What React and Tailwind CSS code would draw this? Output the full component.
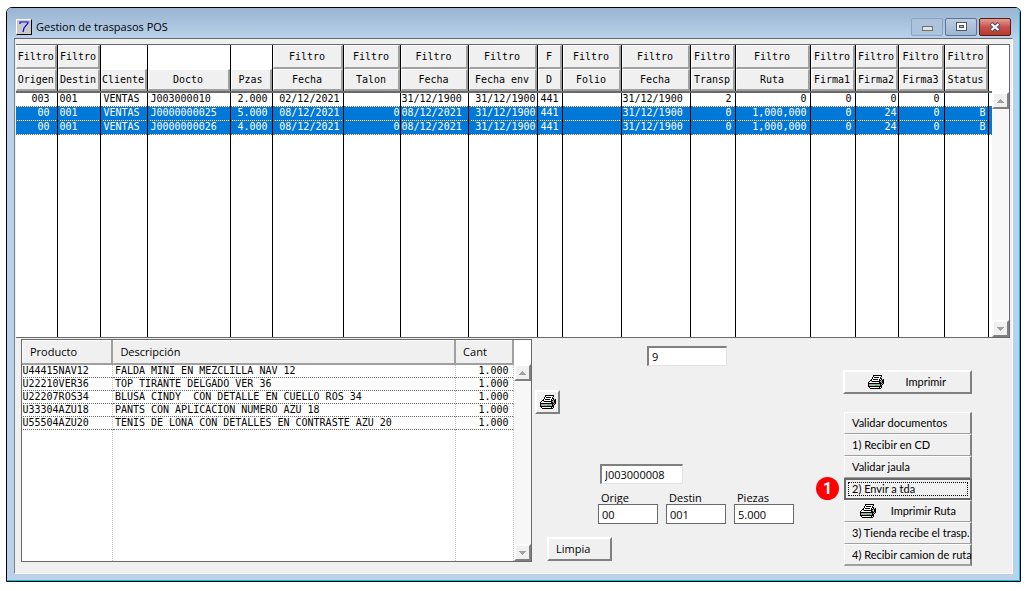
import { useState } from "react";

const columns = [
  { key: "origen", label: "Origen", filter: "Filtro", width: "w-[41px]", align: "text-right pr-[7px]" },
  { key: "destin", label: "Destin", filter: "Filtro", width: "w-[43px]", align: "text-left pl-[2px]" },
  { key: "cliente", label: "Cliente", width: "w-[47px]", align: "text-left pl-[3px]" },
  { key: "docto", label: "Docto", width: "w-[83px]", align: "text-left pl-[3px]" },
  { key: "pzas", label: "Pzas", width: "w-[42px]", align: "text-right pr-[4px]" },
  { key: "fecha", label: "Fecha", filter: "Filtro", width: "w-[71px]", align: "text-right pr-[3px]" },
  { key: "talon", label: "Talon", filter: "Filtro", width: "w-[57px]", align: "text-right" },
  { key: "fecha2", label: "Fecha", filter: "Filtro", width: "w-[68px]", align: "text-left pl-[1px]" },
  { key: "fechaEnv", label: "Fecha env", filter: "Filtro", width: "w-[69px]", align: "text-right pr-[1px]" },
  { key: "d", label: "D", filter: "F", width: "w-[25px]", align: "text-left pl-[3px]" },
  { key: "folio", label: "Folio", filter: "Filtro", width: "w-[59px]", align: "text-left" },
  { key: "fecha3", label: "Fecha", filter: "Filtro", width: "w-[69px]", align: "text-left pl-[1px]" },
  { key: "transp", label: "Transp", filter: "Filtro", width: "w-[45px]", align: "text-right pr-[3px]" },
  { key: "ruta", label: "Ruta", filter: "Filtro", width: "w-[75px]", align: "text-right pr-[3px]" },
  { key: "firma1", label: "Firma1", filter: "Filtro", width: "w-[45px]", align: "text-right pr-[3px]" },
  { key: "firma2", label: "Firma2", filter: "Filtro", width: "w-[43px]", align: "text-right pr-[1px]" },
  { key: "firma3", label: "Firma3", filter: "Filtro", width: "w-[46px]", align: "text-right pr-[4px]" },
  { key: "status", label: "Status", filter: "Filtro", width: "w-[44px]", align: "text-right pr-[2px]" },
];

const transfers = [
  {
    id: 1, origen: "003", destin: "001", cliente: "VENTAS", docto: "J003000010", pzas: "2.000",
    fecha: "02/12/2021", talon: "", fecha2: "31/12/1900", fechaEnv: "31/12/1900", d: "441", folio: "",
    fecha3: "31/12/1900", transp: "2", ruta: "0", firma1: "0", firma2: "0", firma3: "0", status: "",
  },
  {
    id: 2, origen: "00", destin: "001", cliente: "VENTAS", docto: "J0000000025", pzas: "5.000",
    fecha: "08/12/2021", talon: "0", fecha2: "08/12/2021", fechaEnv: "31/12/1900", d: "441", folio: "",
    fecha3: "31/12/1900", transp: "0", ruta: "1,000,000", firma1: "0", firma2: "24", firma3: "0", status: "B",
    selected: true,
  },
  {
    id: 3, origen: "00", destin: "001", cliente: "VENTAS", docto: "J0000000026", pzas: "4.000",
    fecha: "08/12/2021", talon: "0", fecha2: "08/12/2021", fechaEnv: "31/12/1900", d: "441", folio: "",
    fecha3: "31/12/1900", transp: "0", ruta: "1,000,000", firma1: "0", firma2: "24", firma3: "0", status: "B",
    selected: true,
  },
];

const products = [
  { code: "U44415NAV12", name: "FALDA MINI EN MEZCLILLA NAV 12", qty: "1.000" },
  { code: "U22210VER36", name: "TOP TIRANTE DELGADO VER 36", qty: "1.000" },
  { code: "U22207ROS34", name: "BLUSA CINDY  CON DETALLE EN CUELLO ROS 34", qty: "1.000" },
  { code: "U33304AZU18", name: "PANTS CON APLICACION NUMERO AZU 18", qty: "1.000" },
  { code: "U55504AZU20", name: "TENIS DE LONA CON DETALLES EN CONTRASTE AZU 20", qty: "1.000" },
];

const mono = "font-['DejaVu_Sans_Mono',monospace] text-[10px]";
const raised =
  "bg-[#f0f0f0] border-t border-l border-r-2 border-b-2 border-t-white border-l-white border-r-[#a0a0a0] border-b-[#a0a0a0]";
const raisedDark =
  "bg-[#f0f0f0] border-t-2 border-l-2 border-r-2 border-b-2 border-t-white border-l-white border-r-[#808080] border-b-[#808080]";

// Printer drawn pixel by pixel
const printerRows = [
  ".....#########..",
  ".....#wwwwwww#..",
  "....#w#####w#...",
  "....#wwwwwww##..",
  "...#w#####w#.#g#",
  "..##wwwwwww##g##",
  ".#wg########gg##",
  "#wwwwwwwwww##g##",
  "##############g#",
  "#ggggggggggg#g#.",
  "#ggggggGGGgg##..",
  "##############..",
  ".#wwwwwwwww#.#..",
  "..###########...",
];
const printerColors = { "#": "#000", w: "#fff", g: "#a8a8a8", G: "#00e030" };

function PrinterIcon() {
  return (
    <svg width="16" height="14" viewBox="0 0 16 14" shapeRendering="crispEdges" aria-hidden="true">
      {printerRows.map((row, y) =>
        row.split("").map((p, x) =>
          printerColors[p] ? <rect key={`${x}-${y}`} x={x} y={y} width="1" height="1" fill={printerColors[p]} /> : null
        )
      )}
    </svg>
  );
}

function ScrollBar({ className }) {
  return (
    <div className={`flex flex-col justify-between bg-[#f7f7f7] ${className}`}>
      <button aria-label="Subir" className={`flex h-[17px] w-full items-center justify-center ${raisedDark}`}>
        <svg width="7" height="4" viewBox="0 0 7 4" shapeRendering="crispEdges">
          <path d="M3 0h1v1h1v1h1v1h1v1H0V3h1V2h1V1h1z" fill="#a0a0a0" />
        </svg>
      </button>
      <button aria-label="Bajar" className={`flex h-[17px] w-full items-center justify-center ${raisedDark}`}>
        <svg width="7" height="4" viewBox="0 0 7 4" shapeRendering="crispEdges">
          <path d="M0 0h7v1H6v1H5v1H4v1H3V3H2V2H1V1H0z" fill="#a0a0a0" />
        </svg>
      </button>
    </div>
  );
}

function TitleBar() {
  return (
    <div className="flex h-[30px] items-center bg-linear-to-b from-[#99b4d1] to-[#b9d1ea] pt-[7px] pr-2 pl-[9px]">
      <div className="flex h-4 w-4 items-center justify-center border border-t-white border-l-white border-r-black border-b-black bg-[#c8c8c8]">
        <svg width="10" height="12" viewBox="0 0 10 12" aria-hidden="true">
          <path d="M1 3V1h8v1L5 7l-1 4" fill="none" stroke="#0000ff" strokeWidth="1.2" />
        </svg>
      </div>
      <h1 className="ml-1 flex-1 text-[11px] leading-4">Gestion de traspasos POS</h1>
      <div className="flex gap-[2px]">
        <button aria-label="Minimizar" className="flex h-[18px] w-8 items-center justify-center rounded-xs border border-[#8ba3bf] bg-[#abc3dd] pt-1">
          <svg width="11" height="5" viewBox="0 0 11 5"><rect x=".5" y=".5" width="10" height="4" fill="#e4e4dc" stroke="#707070" /></svg>
        </button>
        <button aria-label="Maximizar" className="flex h-[18px] w-8 items-center justify-center rounded-xs border border-[#5d7590] bg-linear-to-b from-[#b9cde3] to-[#9db6d2]">
          <svg width="11" height="9" viewBox="0 0 11 9">
            <rect x=".5" y=".5" width="10" height="8" fill="#fff" stroke="#505868" />
            <rect x="3.5" y="3.5" width="4" height="2" fill="#9db6d2" stroke="#505868" />
          </svg>
        </button>
        <button aria-label="Cerrar" className="flex h-[18px] w-8 items-center justify-center rounded-xs border border-[#5a1a18] bg-linear-to-b from-[#e0a095] via-[#c75050] to-[#b83a28]">
          <svg width="12" height="10" viewBox="0 0 12 10">
            <path d="M2 1.5l8 7M10 1.5l-8 7" stroke="#505060" strokeWidth="4" />
            <path d="M2.500 2l7 6M9.500 2l-7 6" stroke="#fff" strokeWidth="2.200" />
          </svg>
        </button>
      </div>
    </div>
  );
}

function TransfersTable() {
  return (
    <div className="flex border-t border-r border-b border-[#696969] bg-white">
      <table className={`min-w-0 flex-1 table-fixed border-collapse ${mono}`}>
        <colgroup>
          {columns.map((c) => (
            <col key={c.key} className={c.width} />
          ))}
          <col className="w-[4px]" />
        </colgroup>
        <thead>
          <tr className="h-6">
            {columns.map((c) => (
              <td key={c.key} className="border-r border-black p-0">
                {c.filter && (
                  <button className={`block h-6 w-full pt-px text-center leading-5 ${raised}`}>{c.filter}</button>
                )}
              </td>
            ))}
            <td className="p-0" />
          </tr>
          <tr className="h-[23px] border-b-2 border-[#696969]">
            {columns.map((c) => (
              <th key={c.key} scope="col" className="border-r border-black p-0 font-normal">
                <button className={`block h-[22px] w-full text-center leading-5 whitespace-nowrap ${raised}`}>{c.label}</button>
              </th>
            ))}
            <td className="p-0" />
          </tr>
        </thead>
        <tbody>
          {transfers.map((t) => (
            <tr
              key={t.id}
              className={`h-[14px] border-b border-dotted border-[#696969] ${t.selected ? "bg-[#0078d7] text-white" : ""}`}
            >
              {columns.map((c) => (
                <td key={c.key} className={`overflow-hidden border-r border-solid border-r-black p-0 leading-3 whitespace-nowrap ${c.align}`}>
                  {t[c.key]}
                </td>
              ))}
              <td className="p-0" />
            </tr>
          ))}
          {/* empty part of the grid */}
          <tr className="h-[203px]">
            {columns.map((c) => (
              <td key={c.key} className="border-r border-black p-0" />
            ))}
            <td className="p-0" />
          </tr>
        </tbody>
      </table>
      <ScrollBar className="mt-[47px] w-[17px]" />
    </div>
  );
}

function ProductsTable() {
  return (
    <div className="flex w-[511px] border border-[#696969] bg-white">
      <table className="min-w-0 flex-1 table-fixed border-collapse">
        <colgroup>
          <col className="w-[90px]" />
          <col className="w-[343px]" />
          <col className="w-[58px]" />
        </colgroup>
        <thead>
          <tr className="h-[23px] border-b-2 border-[#696969] text-left text-[11px] leading-4">
            <th scope="col" className={`p-0 pl-[7px] font-normal ${raised}`}>Producto</th>
            <th scope="col" className={`p-0 pl-[7px] font-normal ${raised}`}>Descripción</th>
            <th scope="col" className={`p-0 pl-[7px] font-normal ${raised}`}>Cant</th>
          </tr>
        </thead>
        <tbody className={mono}>
          {products.map((p) => (
            <tr key={p.code} className="h-[13px] border-b border-dotted border-[#696969]">
              <td className="border-r border-dotted border-r-[#c0c0c0] p-0 leading-3">{p.code}</td>
              <td className="border-r border-dotted border-r-[#c0c0c0] p-0 pl-[2px] leading-3 whitespace-pre">{p.name}</td>
              <td className="border-r border-dotted border-r-[#c0c0c0] p-0 pr-1 text-right leading-3">{p.qty}</td>
            </tr>
          ))}
          <tr className="h-[132px]">
            <td className="border-r border-dotted border-[#c0c0c0] p-0" />
            <td className="border-r border-dotted border-[#c0c0c0] p-0" />
            <td className="border-r border-dotted border-[#c0c0c0] p-0" />
          </tr>
        </tbody>
      </table>
      <ScrollBar className="mt-6 w-[17px]" />
    </div>
  );
}

function Field({ id, label, value, onChange }) {
  return (
    <div className="flex w-[60px] flex-col">
      <label htmlFor={id} className="h-3 pl-[3px] leading-3">{label}</label>
      <input
        id={id}
        value={value}
        onChange={(e) => onChange(e.target.value)}
        className="h-5 w-full border border-[#696969] bg-white px-[3px] leading-4 outline-none"
      />
    </div>
  );
}

const sunken =
  "h-5 border border-t-2 border-l-2 border-t-[#808080] border-l-[#808080] border-r-[#e3e3e3] border-b-[#e3e3e3] bg-white px-[3px] leading-4 outline-none";

function TransferForm() {
  const [form, setForm] = useState({ number: "9", docto: "J003000008", origen: "00", destin: "001", piezas: "5.000" });
  const update = (key) => (value) => setForm({ ...form, [key]: value });

  return (
    <div className="flex w-[311px] flex-col items-start pt-[7px] text-[11px]">
      <input
        aria-label="Numero"
        value={form.number}
        onChange={(e) => update("number")(e.target.value)}
        className={`ml-[115px] w-20 ${sunken}`}
      />
      <button aria-label="Imprimir detalle" className={`mt-6 ml-[3px] flex h-6 w-[25px] items-center justify-center ${raisedDark}`}>
        <PrinterIcon />
      </button>
      <input
        aria-label="Documento"
        value={form.docto}
        onChange={(e) => update("docto")(e.target.value)}
        className={`mt-[50px] ml-[68px] w-[83px] ${sunken}`}
      />
      <div className="mt-2 ml-[66px] flex gap-2">
        <Field id="origen" label="Orige" value={form.origen} onChange={update("origen")} />
        <Field id="destin" label="Destin" value={form.destin} onChange={update("destin")} />
        <Field id="piezas" label="Piezas" value={form.piezas} onChange={update("piezas")} />
      </div>
      <button className={`mt-[13px] ml-[15px] h-6 w-[65px] pl-[7px] text-left leading-4 ${raisedDark}`}>Limpia</button>
    </div>
  );
}

function ActionButton({ children, className }) {
  return (
    <button
      className={`flex h-[22px] w-full items-center border-t border-r-2 border-l border-t-white border-r-[#808080] border-b-[#a0a0a0] border-l-white bg-[#f0f0f0] whitespace-nowrap ${className}`}
    >
      {children}
    </button>
  );
}

function Actions() {
  return (
    <div className="mr-[38px] ml-auto w-[129px] pt-[31px] font-['Lato',sans-serif] text-[11px] leading-4">
      <button className={`flex h-6 w-full items-center justify-between pr-6 pl-[23px] ${raisedDark}`}>
        <PrinterIcon />
        Imprimir
      </button>
      <div className="mt-[18px] flex flex-col pl-px">
        <ActionButton className="border-b pl-[7px]">Validar documentos</ActionButton>
        <ActionButton className="border-b pl-[7px]">1) Recibir en CD</ActionButton>
        <ActionButton className="border-b pl-[7px]">Validar jaula</ActionButton>
        <div className="relative">
          <span className="absolute -top-px -left-7 flex h-[23px] w-[23px] items-center justify-center rounded-full bg-[#ff0000] font-['Roboto',sans-serif] text-[16px] font-bold text-white">
            1
          </span>
          <button className="flex h-[22px] w-full border-2 border-[#696969] bg-[#f0f0f0] p-[2px]">
            <span className="flex h-full w-full items-center border border-dotted border-black pl-[3px]">2) Envir a tda</span>
          </button>
        </div>
        <ActionButton className="justify-between border-b pr-[14px] pl-[15px]">
          <PrinterIcon />
          Imprimir Ruta
        </ActionButton>
        <ActionButton className="border-b pl-[7px]">3) Tienda recibe el trasp.</ActionButton>
        <ActionButton className="border-b-2 pl-[7px]">4) Recibir camion de ruta</ActionButton>
      </div>
    </div>
  );
}

export default function App() {
  return (
    <div className="bg-white pt-[7px] pr-2 pb-[9px] pl-[6px] font-['Open_Sans',sans-serif] text-black">
      <main className="overflow-hidden rounded-t-md border border-black">
        <div className="border-r border-b border-[#00c8dc] bg-[#b9d1ea]">
          <TitleBar />
          <div className="mr-[6px] mb-[6px] ml-[7px] border border-t-[#696969] border-l-[#808080] border-r-white border-b-white bg-[#f0f0f0] pt-[5px] pr-[2px] pl-px">
            <TransfersTable />
            <div className="mt-px flex items-start pb-[7px] pl-[5px]">
              <ProductsTable />
              <TransferForm />
              <Actions />
            </div>
          </div>
        </div>
      </main>
    </div>
  );
}
